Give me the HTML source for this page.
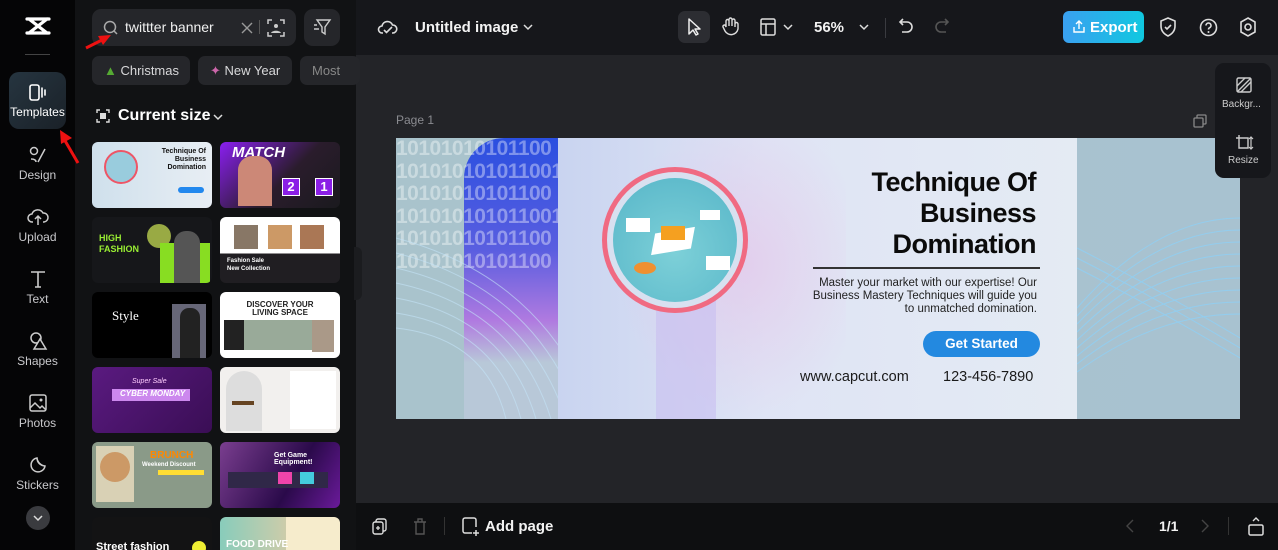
<!DOCTYPE html>
<html><head><meta charset="utf-8">
<style>
*{box-sizing:border-box;margin:0;padding:0}
html{width:1278px;height:550px;overflow:hidden}
body{width:1278px;height:550px;overflow:hidden;background:#232428;font-family:"Liberation Sans",sans-serif;color:#e8e8ea;position:relative}
.abs{position:absolute}
.rail{left:0;top:0;width:75px;height:550px;background:#050506}
.ri{position:absolute;left:0;width:75px;text-align:center;font-size:12px;color:#c9c9cc}
.ri svg{display:block;margin:0 auto 3px}
.panel{left:75px;top:0;width:281px;height:550px;background:#111214}
.top{left:356px;top:0;width:922px;height:55px;background:#16171b}
.bot{left:356px;top:503px;width:922px;height:47px;background:#0e0f11}
.th{position:absolute;width:120px;height:66px;border-radius:6px;overflow:hidden}
.chip{position:absolute;top:56px;height:29px;border-radius:7px;background:#25262a;font-size:13px;color:#d8d8da;line-height:29px;padding-left:12px}
svg{overflow:visible}
</style></head><body>

<div class="abs rail">
  <svg class="abs" style="left:25px;top:16px" width="26" height="20" viewBox="0 0 26 20"><path d="M2 3 L24 3 M2 17 L24 17 M4 3 L22 17 M22 3 L4 17" stroke="#fff" stroke-width="3.2" fill="none" stroke-linecap="round"/></svg>
  <div class="abs" style="left:25px;top:54px;width:25px;height:1px;background:#444"></div>
  <div class="abs" style="left:9px;top:72px;width:57px;height:57px;border-radius:10px;background:linear-gradient(135deg,#263540,#1a2128)"></div>
  <div class="ri" style="top:84px;color:#fff;font-size:12px"><svg width="20" height="18" viewBox="0 0 20 18"><rect x="2" y="1" width="9" height="15" rx="2" stroke="#fff" stroke-width="1.6" fill="none"/><path d="M14 4v9M17 6v5" stroke="#fff" stroke-width="1.6" stroke-linecap="round"/></svg>Templates</div>
  <div class="ri" style="top:145px"><svg width="20" height="20" viewBox="0 0 20 20"><circle cx="6" cy="6" r="3.5" stroke="#ccc" stroke-width="1.5" fill="none"/><path d="M10 17 L17 4 M3 14c3 0 5 1 5 3" stroke="#ccc" stroke-width="1.5" fill="none"/></svg>Design</div>
  <div class="ri" style="top:207px"><svg width="22" height="20" viewBox="0 0 22 20"><path d="M6 15H5a4 4 0 0 1 0-8 6 6 0 0 1 11-1 4.5 4.5 0 0 1 1 9h-1M11 18V9M8 12l3-3 3 3" stroke="#ccc" stroke-width="1.5" fill="none"/></svg>Upload</div>
  <div class="ri" style="top:269px"><svg width="20" height="20" viewBox="0 0 20 20"><path d="M3 3h14M10 3v15M7 18h6" stroke="#ccc" stroke-width="1.6" fill="none"/></svg>Text</div>
  <div class="ri" style="top:331px"><svg width="20" height="20" viewBox="0 0 20 20"><circle cx="8" cy="7" r="5" stroke="#ccc" stroke-width="1.5" fill="none"/><path d="M12 8l6 10H6z" stroke="#ccc" stroke-width="1.5" fill="#050506"/></svg>Shapes</div>
  <div class="ri" style="top:393px"><svg width="20" height="20" viewBox="0 0 20 20"><rect x="2" y="2" width="16" height="16" rx="2" stroke="#ccc" stroke-width="1.5" fill="none"/><path d="M2 15l5-5 5 5 2-2 4 4" stroke="#ccc" stroke-width="1.5" fill="none"/><circle cx="13" cy="7" r="1.5" fill="#ccc"/></svg>Photos</div>
  <div class="ri" style="top:455px"><svg width="20" height="20" viewBox="0 0 20 20"><path d="M17 11a7 7 0 1 1-8-8 9 9 0 0 0 8 8zM9 3a8 8 0 0 0 8 8" stroke="#ccc" stroke-width="1.5" fill="none"/></svg>Stickers</div>
  <div class="abs" style="left:26px;top:506px;width:24px;height:24px;border-radius:50%;background:#3a3b3f"></div>
  <svg class="abs" style="left:33px;top:515px" width="10" height="6"><path d="M1 1l4 4 4-4" stroke="#ddd" stroke-width="1.5" fill="none"/></svg>
</div>

<div class="abs panel">
  <div class="abs" style="left:17px;top:9px;width:204px;height:37px;border-radius:9px;background:#25262a"></div>
  <svg class="abs" style="left:28px;top:20px" width="16" height="16"><circle cx="7" cy="7" r="5.5" stroke="#aaa" stroke-width="1.5" fill="none"/><path d="M11 11l3 3" stroke="#aaa" stroke-width="1.5"/></svg>
  <div class="abs" style="left:50px;top:19px;font-size:14px;color:#f0f0f0">twittter banner</div>
  <svg class="abs" style="left:166px;top:22px" width="12" height="12"><path d="M1 1l10 10M11 1L1 11" stroke="#999" stroke-width="1.4"/></svg>
  <div class="abs" style="left:184px;top:20px;width:1px;height:14px;background:#555"></div>
  <svg class="abs" style="left:192px;top:19px" width="18" height="18"><path d="M1 5V1h4M13 1h4v4M17 13v4h-4M5 17H1v-4" stroke="#ccc" stroke-width="1.5" fill="none"/><circle cx="9" cy="7" r="2" fill="#ccc"/><path d="M4 14c1-3 9-3 10 0z" fill="#ccc"/></svg>
  <div class="abs" style="left:229px;top:9px;width:36px;height:37px;border-radius:9px;background:#25262a"></div>
  <svg class="abs" style="left:238px;top:19px" width="18" height="17"><path d="M4 1h13l-5 7v7l-3-2V8z" stroke="#ccc" stroke-width="1.4" fill="none"/><path d="M1 6h3M1 10h5" stroke="#ccc" stroke-width="1.4"/></svg>
  <div class="chip" style="left:17px;width:98px"><span style="color:#5a3">▲</span> Christmas</div>
  <div class="chip" style="left:123px;width:94px"><span style="color:#c6a">✦</span> New Year</div>
  <div class="chip" style="left:225px;width:60px;color:#888">Most</div>
  <svg class="abs" style="left:21px;top:109px" width="14" height="14"><path d="M1 4V1h3M10 1h3v3M13 10v3h-3M4 13H1v-3" stroke="#ddd" stroke-width="1.4" fill="none"/><rect x="4" y="4" width="6" height="6" fill="#ddd"/></svg>
  <div class="abs" style="left:43px;top:107px;font-size:16px;font-weight:bold;color:#fff">Current size</div>
  <svg class="abs" style="left:138px;top:114px" width="10" height="6"><path d="M1 1l4 4 4-4" stroke="#ddd" stroke-width="1.5" fill="none"/></svg>
  <div class="abs" style="left:279px;top:247px;width:8px;height:53px;border-radius:0 6px 6px 0;background:#1b1c1f"></div>

  <div class="th" style="left:17px;top:142px;background:linear-gradient(90deg,#cfe0ec,#e8eef4)"><div style="position:absolute;left:12px;top:8px;width:34px;height:34px;border-radius:50%;border:2px solid #e56;background:#9cd"></div><div style="position:absolute;right:6px;top:6px;font-size:7px;font-weight:bold;color:#111;text-align:right;line-height:8px">Technique Of<br>Business<br>Domination</div><div style="position:absolute;right:8px;top:45px;width:26px;height:6px;border-radius:3px;background:#28e"></div></div>
  <div class="th" style="left:145px;top:142px;background:linear-gradient(135deg,#8a1ff0 0,#2a1c2c 55%,#1a1a1e)"><div style="position:absolute;left:12px;top:2px;font-size:15px;font-weight:bold;font-style:italic;color:#fff">MATCH</div><div style="position:absolute;left:18px;top:14px;width:34px;height:50px;background:#c87;border-radius:14px 14px 0 0"></div><div style="position:absolute;left:62px;top:36px;width:18px;height:18px;background:#8b1fe6;border:1px solid #fff;color:#fff;font-size:13px;font-weight:bold;text-align:center">2</div><div style="position:absolute;left:95px;top:36px;width:18px;height:18px;background:#8b1fe6;border:1px solid #fff;color:#fff;font-size:13px;font-weight:bold;text-align:center">1</div></div>
  <div class="th" style="left:17px;top:217px;background:#16171a"><div style="position:absolute;left:7px;top:16px;font-size:9px;font-weight:bold;color:#9e3;line-height:11px">HIGH<br>FASHION</div><div style="position:absolute;left:55px;top:7px;width:24px;height:24px;border-radius:50%;background:#9a4"></div><div style="position:absolute;left:68px;top:26px;width:50px;height:40px;background:#8d2"></div><div style="position:absolute;left:82px;top:14px;width:26px;height:52px;background:#555;border-radius:12px 12px 0 0"></div></div>
  <div class="th" style="left:145px;top:217px;background:linear-gradient(#fff 0,#fff 55%,#201e22 55%)"><div style="position:absolute;left:14px;top:8px;width:24px;height:24px;background:#876"></div><div style="position:absolute;left:48px;top:8px;width:24px;height:24px;background:#c96"></div><div style="position:absolute;left:80px;top:8px;width:24px;height:24px;background:#a75"></div><div style="position:absolute;left:7px;top:40px;font-size:6px;font-weight:bold;color:#fff;line-height:8px">Fashion Sale<br>New Collection</div></div>
  <div class="th" style="left:17px;top:292px;background:#000"><div style="position:absolute;left:20px;top:16px;font-size:13px;font-family:'Liberation Serif';color:#fff">Style</div><div style="position:absolute;left:80px;top:12px;width:34px;height:54px;background:#667"></div><div style="position:absolute;left:88px;top:16px;width:20px;height:50px;background:#222;border-radius:9px 9px 0 0"></div></div>
  <div class="th" style="left:145px;top:292px;background:#fff"><div style="position:absolute;left:0;width:120px;top:9px;text-align:center;font-size:8px;font-weight:bold;color:#222;line-height:8px">DISCOVER YOUR<br>LIVING SPACE</div><div style="position:absolute;left:20px;top:28px;width:72px;height:30px;background:#9a9;"></div><div style="position:absolute;left:4px;top:28px;width:20px;height:30px;background:#222"></div><div style="position:absolute;left:92px;top:28px;width:22px;height:32px;background:#a98"></div></div>
  <div class="th" style="left:17px;top:367px;background:linear-gradient(135deg,#5a1a80,#3a0e55)"><div style="position:absolute;left:20px;top:22px;width:78px;height:12px;background:#c8e"></div><div style="position:absolute;left:28px;top:22px;font-size:8px;font-weight:bold;font-style:italic;color:#fff">CYBER MONDAY</div><div style="position:absolute;left:40px;top:11px;font-size:7px;font-style:italic;color:#fcf">Super Sale</div></div>
  <div class="th" style="left:145px;top:367px;background:#f2f0ee"><div style="position:absolute;left:6px;top:4px;width:36px;height:60px;background:#ddd;border-radius:18px 18px 0 0"></div><div style="position:absolute;left:12px;top:34px;width:22px;height:4px;background:#642"></div><div style="position:absolute;left:70px;top:4px;width:46px;height:58px;background:#fff"></div></div>
  <div class="th" style="left:17px;top:442px;background:#8a9a88"><div style="position:absolute;left:4px;top:4px;width:38px;height:56px;background:#d9d1b5"></div><div style="position:absolute;left:8px;top:10px;width:30px;height:30px;border-radius:50%;background:#c96"></div><div style="position:absolute;left:58px;top:8px;font-size:10px;font-weight:bold;color:#f80">BRUNCH</div><div style="position:absolute;left:50px;top:20px;font-size:6px;font-weight:bold;color:#fff">Weekend Discount</div><div style="position:absolute;left:66px;top:28px;width:46px;height:5px;background:#fd3"></div></div>
  <div class="th" style="left:145px;top:442px;background:linear-gradient(120deg,#7a3e8f,#2a0a4a 60%,#6a1a9a)"><div style="position:absolute;left:54px;top:10px;font-size:7px;font-weight:bold;color:#fff">Get Game Equipment!</div><div style="position:absolute;left:8px;top:30px;width:100px;height:16px;background:#302848"></div><div style="position:absolute;left:58px;top:30px;width:14px;height:12px;background:#e4a"></div><div style="position:absolute;left:80px;top:30px;width:14px;height:12px;background:#4cd"></div></div>
  <div class="th" style="left:17px;top:517px;background:#131314;height:40px"><div style="position:absolute;left:4px;top:24px;font-size:11px;font-weight:bold;color:#fff">Street fashion</div><div style="position:absolute;left:100px;top:24px;width:14px;height:14px;border-radius:50%;background:#ee3"></div></div>
  <div class="th" style="left:145px;top:517px;background:linear-gradient(90deg,#8cb 0,#cca 55%,#f6eccc 55%);height:40px"><div style="position:absolute;left:6px;top:22px;font-size:10px;font-weight:bold;color:#fff">FOOD DRIVE</div></div>
</div>

<svg class="abs" style="left:84px;top:32px" width="30" height="20"><path d="M2 16L20 7" stroke="#e11" stroke-width="3"/><path d="M27 3L14 4l5 9z" fill="#e11"/></svg>
<svg class="abs" style="left:56px;top:127px" width="26" height="40"><path d="M22 36L8 12" stroke="#e11" stroke-width="3"/><path d="M4 3l1 14 11-6z" fill="#e11"/></svg>

<div class="abs top">
  <svg class="abs" style="left:22px;top:18px" width="20" height="18"><path d="M5 15H4a3.5 3.5 0 0 1 0-7 5.5 5.5 0 0 1 10.5-1A4 4 0 0 1 15 15h-1M6 12l2.5 2.5L14 9" stroke="#ddd" stroke-width="1.6" fill="none"/></svg>
  <div class="abs" style="left:59px;top:19px;font-size:15px;font-weight:bold;color:#f2f2f2">Untitled image</div>
  <svg class="abs" style="left:167px;top:24px" width="10" height="6"><path d="M1 1l4 4 4-4" stroke="#ddd" stroke-width="1.5" fill="none"/></svg>
  <div class="abs" style="left:322px;top:11px;width:32px;height:32px;border-radius:7px;background:#2c2d32"></div>
  <svg class="abs" style="left:331px;top:18px" width="14" height="18"><path d="M2 1v15l4-4 3 5 2-1-3-5h5z" stroke="#eee" stroke-width="1.5" fill="none" stroke-linejoin="round"/></svg>
  <svg class="abs" style="left:365px;top:17px" width="18" height="20"><path d="M5 10V4a1.5 1.5 0 0 1 3 0v5V2.5a1.5 1.5 0 0 1 3 0V9V3.5a1.5 1.5 0 0 1 3 0V10v-3a1.5 1.5 0 0 1 3 0v5a7 7 0 0 1-13 2l-2-4a1.5 1.5 0 0 1 2.5-1.5z" stroke="#ddd" stroke-width="1.4" fill="none"/></svg>
  <svg class="abs" style="left:404px;top:18px" width="16" height="18"><rect x="1" y="1" width="14" height="16" rx="1.5" stroke="#ddd" stroke-width="1.5" fill="none"/><path d="M1 6h14M6 6v11" stroke="#ddd" stroke-width="1.5"/></svg>
  <svg class="abs" style="left:427px;top:24px" width="10" height="6"><path d="M1 1l4 4 4-4" stroke="#ddd" stroke-width="1.5" fill="none"/></svg>
  <div class="abs" style="left:458px;top:19px;font-size:15px;font-weight:bold;color:#f2f2f2">56%</div>
  <svg class="abs" style="left:503px;top:24px" width="10" height="6"><path d="M1 1l4 4 4-4" stroke="#ddd" stroke-width="1.5" fill="none"/></svg>
  <div class="abs" style="left:529px;top:18px;width:1px;height:20px;background:#3a3b40"></div>
  <svg class="abs" style="left:542px;top:18px" width="16" height="18"><path d="M5 1L2 4l3 3M2 4h7a5 5 0 0 1 0 10H4" stroke="#ddd" stroke-width="1.6" fill="none"/></svg>
  <svg class="abs" style="left:578px;top:18px" width="16" height="18"><path d="M11 1l3 3-3 3M14 4H7a5 5 0 0 0 0 10h5" stroke="#555" stroke-width="1.6" fill="none"/></svg>
  <div class="abs" style="left:707px;top:11px;width:81px;height:32px;border-radius:6px;background:linear-gradient(90deg,#3aa0f0,#10c8e0)"></div>
  <svg class="abs" style="left:716px;top:19px" width="14" height="15"><path d="M7 10V2M4 5l3-3 3 3M2 8v5h10V8" stroke="#fff" stroke-width="1.4" fill="none"/></svg>
  <div class="abs" style="left:734px;top:19px;font-size:15px;font-weight:bold;color:#fff">Export</div>
  <svg class="abs" style="left:803px;top:17px" width="18" height="20"><path d="M9 1l7 3v5c0 5-3 8-7 10-4-2-7-5-7-10V4z" stroke="#ddd" stroke-width="1.6" fill="none"/><path d="M6 10l2 2 4-4" stroke="#ddd" stroke-width="1.6" fill="none"/></svg>
  <svg class="abs" style="left:843px;top:18px" width="19" height="19"><circle cx="9.5" cy="9.5" r="8" stroke="#ddd" stroke-width="1.6" fill="none"/><path d="M7 7.5a2.5 2.5 0 1 1 3.5 2.3c-.8.4-1 1-1 1.7" stroke="#ddd" stroke-width="1.6" fill="none"/><circle cx="9.5" cy="14" r="1" fill="#ddd"/></svg>
  <svg class="abs" style="left:883px;top:17px" width="18" height="20"><path d="M9 1l7 4v10l-7 4-7-4V5z" stroke="#ddd" stroke-width="1.6" fill="none"/><circle cx="9" cy="10" r="3" stroke="#ddd" stroke-width="1.6" fill="none"/></svg>
</div>

<div class="abs" style="left:396px;top:113px;font-size:12px;color:#8a8b90">Page 1</div>
<svg class="abs" style="left:1193px;top:114px" width="14" height="14"><rect x="4" y="1" width="9" height="9" rx="1" stroke="#888" stroke-width="1.3" fill="none"/><rect x="1" y="4" width="9" height="9" rx="1" stroke="#888" stroke-width="1.3" fill="#232428"/></svg>

<div class="abs" style="left:396px;top:138px;width:844px;height:281px;overflow:hidden;background:linear-gradient(90deg,#a9c3cc 0,#a8c2d0 100%)">
  <div class="abs" style="left:68px;top:0;width:120px;height:281px;background:linear-gradient(180deg,#2a4fe0 0,#5a5ee0 40%,#b07ae0 65%,#b8c8d8 80%);border-radius:40px 0 0 0"></div>
  <div class="abs" style="left:0;top:0;width:165px;font-family:'Liberation Sans';font-size:21px;font-weight:bold;line-height:22.5px;color:rgba(255,255,255,.38);white-space:nowrap;letter-spacing:-.5px">10101010101100<br>10101010101100101<br>10101010101100<br>10101010101100101<br>10101010101100<br>10101010101100</div>
  <svg class="abs" style="left:0;top:0" width="844" height="281"><g stroke="#c4e4f8" stroke-width="1" fill="none" opacity=".6"><path d="M0 100Q150 140 200 281"/><path d="M0 115Q140 150 185 281"/><path d="M0 130Q130 160 170 281"/><path d="M0 145Q120 170 155 281"/><path d="M0 160Q110 180 140 281"/><path d="M0 175Q100 190 125 281"/><path d="M0 190Q90 200 110 281"/></g><g stroke="#8fd0f6" stroke-width="1" fill="none" opacity=".8"><path d="M681 170Q760 80 844 80"/><path d="M681 178Q760 92 844 92"/><path d="M681 186Q760 104 844 104"/><path d="M681 194Q760 116 844 116"/><path d="M681 202Q760 128 844 128"/><path d="M681 210Q760 140 844 140"/><path d="M681 218Q760 152 844 152"/><path d="M681 226Q760 164 844 164"/><path d="M681 234Q760 176 844 176"/><path d="M681 110Q760 150 844 200"/><path d="M681 120Q760 160 844 210"/><path d="M681 130Q760 170 844 220"/></g></svg>
  <div class="abs" style="left:162px;top:0;width:519px;height:281px;background:linear-gradient(90deg,#c9d4f0 0,#dfe4f5 40%,#e4ebf3 100%)"></div>
  <div class="abs" style="left:220px;top:0;width:230px;height:281px;background:radial-gradient(ellipse at 55% 45%,rgba(230,190,230,.55),rgba(230,190,230,0) 70%)"></div>
  <div class="abs" style="left:260px;top:150px;width:60px;height:131px;background:rgba(200,190,240,.6)"></div>
  <div class="abs" style="left:206px;top:29px;width:146px;height:146px;border-radius:50%;border:5px solid #f06a82;background:#d8e0f0"></div>
  <div class="abs" style="left:217px;top:40px;width:124px;height:124px;border-radius:50%;background:radial-gradient(circle at 50% 60%,#7dd0d8,#56b5c8)"></div>
  <div class="abs" style="left:258px;top:92px;width:38px;height:22px;background:#fff;transform:skewX(-20deg) rotate(-10deg)"></div>
  <div class="abs" style="left:265px;top:88px;width:24px;height:14px;background:#f5a020"></div>
  <div class="abs" style="left:230px;top:80px;width:24px;height:14px;background:#fff"></div>
  <div class="abs" style="left:310px;top:118px;width:24px;height:14px;background:#fff"></div>
  <div class="abs" style="left:238px;top:124px;width:22px;height:12px;background:#f09030;border-radius:50%"></div>
  <div class="abs" style="left:304px;top:72px;width:20px;height:10px;background:#fff"></div>
  <div class="abs" style="left:390px;top:29px;width:250px;text-align:right;font-size:27px;font-weight:bold;color:#0b0b0b;line-height:31px;letter-spacing:-.5px">Technique Of<br>Business<br>Domination</div>
  <div class="abs" style="left:417px;top:129px;width:227px;height:2px;background:#333"></div>
  <div class="abs" style="left:390px;top:139px;width:251px;text-align:right;font-size:11.5px;color:#222;line-height:13.2px">Master your market with our expertise! Our<br>Business Mastery Techniques will guide you<br>to unmatched domination.</div>
  <div class="abs" style="left:527px;top:193px;width:117px;height:26px;border-radius:13px;background:#2389e0;color:#fff;font-size:13.5px;font-weight:bold;text-align:center;line-height:26px">Get Started</div>
  <div class="abs" style="left:404px;top:231px;font-size:14.5px;color:#1a1a1a">www.capcut.com</div>
  <div class="abs" style="left:547px;top:231px;font-size:14.5px;color:#1a1a1a">123-456-7890</div>
</div>

<div class="abs" style="left:1215px;top:63px;width:56px;height:115px;border-radius:9px;background:#16171b"></div>
<svg class="abs" style="left:1236px;top:77px" width="16" height="16"><rect x="1" y="1" width="14" height="14" rx="1.5" stroke="#ccc" stroke-width="1.4" fill="none"/><path d="M1 9L9 1M5 15L15 5M1 15L15 1" stroke="#ccc" stroke-width="1.4"/></svg>
<div class="abs" style="left:1222px;top:99px;font-size:10px;color:#ccc">Backgr...</div>
<svg class="abs" style="left:1235px;top:134px" width="18" height="16"><path d="M4 1v3H1M4 4h9v10H4z" stroke="#ccc" stroke-width="1.4" fill="none"/><path d="M16 3v12M14 5l2-2 2 2M14 13l2 2 2-2" stroke="#ccc" stroke-width="1.2" fill="none"/></svg>
<div class="abs" style="left:1228px;top:155px;font-size:10px;color:#ccc">Resize</div>

<div class="abs bot">
  <svg class="abs" style="left:16px;top:15px" width="16" height="18"><rect x="4" y="1" width="10" height="12" rx="2" stroke="#ddd" stroke-width="1.4" fill="none"/><rect x="1" y="4" width="10" height="12" rx="2" stroke="#ddd" stroke-width="1.4" fill="#0e0f11"/><path d="M6 8v4M4 10h4" stroke="#ddd" stroke-width="1.3"/></svg>
  <svg class="abs" style="left:57px;top:15px" width="14" height="17"><path d="M1 4h12M5 4V1h4v3M3 4v12h8V4" stroke="#555" stroke-width="1.4" fill="none"/></svg>
  <div class="abs" style="left:88px;top:14px;width:1px;height:18px;background:#333"></div>
  <svg class="abs" style="left:106px;top:14px" width="18" height="20"><path d="M10 16H3a2 2 0 0 1-2-2V3a2 2 0 0 1 2-2h9a2 2 0 0 1 2 2v7M14 13v6M11 16h6" stroke="#ddd" stroke-width="1.5" fill="none"/></svg>
  <div class="abs" style="left:129px;top:15px;font-size:15px;font-weight:bold;color:#f2f2f2">Add page</div>
  <svg class="abs" style="left:770px;top:16px" width="8" height="14"><path d="M7 1L1 7l6 6" stroke="#444" stroke-width="1.4" fill="none"/></svg>
  <div class="abs" style="left:803px;top:15px;font-size:14px;font-weight:bold;color:#f2f2f2">1/1</div>
  <svg class="abs" style="left:845px;top:16px" width="8" height="14"><path d="M1 1l6 6-6 6" stroke="#444" stroke-width="1.4" fill="none"/></svg>
  <div class="abs" style="left:872px;top:14px;width:1px;height:18px;background:#333"></div>
  <svg class="abs" style="left:892px;top:13px" width="16" height="20"><path d="M5 5l3-3 3 3" stroke="#ddd" stroke-width="1.4" fill="none"/><rect x="1" y="9" width="14" height="10" rx="1.5" stroke="#ddd" stroke-width="1.5" fill="none"/></svg>
</div>
</body></html>
